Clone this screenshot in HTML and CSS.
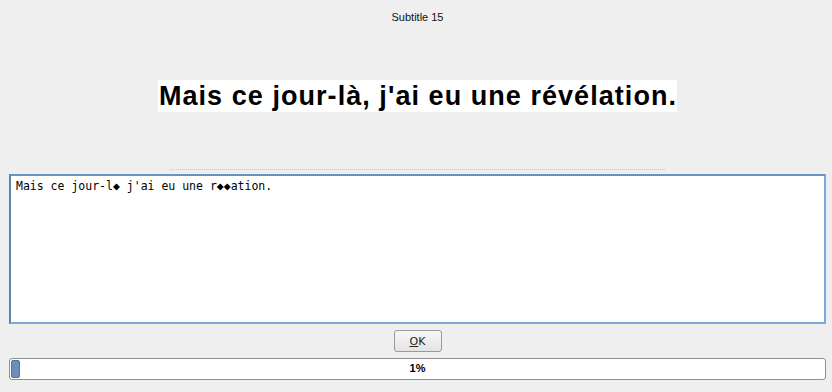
FILE: index.html
```html
<!DOCTYPE html>
<html lang="fr">
<head>
  <meta charset="UTF-8" />
  <title>Subtitle 15</title>
  <link rel="stylesheet" href="styles.css">
</head>
<body>
  <div class="dialog">
    <div class="titre">Subtitle 15</div>

    <div class="apercu">
      <span class="sous-titre">Mais ce jour-là, j'ai eu une révélation.</span>
    </div>

    <div class="separateur"></div>

    <div class="saisie">Mais ce jour-l<span class="bad">◆</span> j'ai eu une r<span class="bad">◆◆</span>ation.</div>

    <div class="actions">
      <button class="bouton"><u>O</u>K</button>
    </div>

    <div class="progression">
      <div class="barre" style="width: 1%"></div>
      <span class="pourcent">1%</span>
    </div>
  </div>
</body>
</html>
```

FILE: styles.css
```css
/* base */
* {
  box-sizing: border-box;
}
body {
  margin: 0;
  background: #efefef;
  font-family: 'Liberation Sans', Arial, sans-serif;
  color: #000;
}
.dialog {
  width: 832px;
  height: 392px;
  padding: 10px 6px 0 9px;
  display: flex;
  flex-direction: column;
}
.titre {
  text-align: center;
  font-size: 11px;
  line-height: 14px;
  color: #111;
}
.apercu {
  display: flex;
  justify-content: center;
  margin-top: 56px;
}
.sous-titre {
  background: #fff;
  font-size: 27px;
  font-weight: bold;
  letter-spacing: 1.05px;
  line-height: 32px;
  padding: 0 0 0 1px;
}
.separateur {
  margin: 57px 161px 0 161px;
  border-top: 1px dotted #c4c4c4;
  height: 1px;
}
.saisie {
  margin-top: 4px;
  height: 150px;
  background: #fff;
  border: 2px solid #7fa9d6;
  border-left-color: #5b83ad;
  border-top-color: #6a93c0;
  padding: 3px 5px;
  font-family: 'DejaVu Sans Mono', monospace;
  font-size: 11.5px;
  line-height: 14px;
}
.bad {
  font-size: 11.5px;
}
.actions {
  display: flex;
  justify-content: center;
  margin-top: 6px;
}
.bouton {
  width: 48px;
  height: 22px;
  border: 1px solid #9a9a9a;
  border-radius: 3px;
  background: linear-gradient(#f8f8f8, #e4e4e4);
  font-family: 'DejaVu Sans', sans-serif;
  font-size: 11px;
  color: #222;
  padding: 0;
}
.bouton u {
  text-decoration-thickness: 1px;
}
.progression {
  position: relative;
  margin-top: 6px;
  height: 22px;
  background: #fff;
  border: 1px solid #8e8e8e;
  border-radius: 3px;
  padding: 1px;
}
.barre {
  height: 100%;
  min-width: 9px;
  background: #6a8fba;
  border: 1px solid #4f739c;
  border-radius: 2px;
}
.pourcent {
  position: absolute;
  left: 0;
  right: 0;
  top: 3px;
  text-align: center;
  font-size: 11px;
  font-weight: bold;
}
```
